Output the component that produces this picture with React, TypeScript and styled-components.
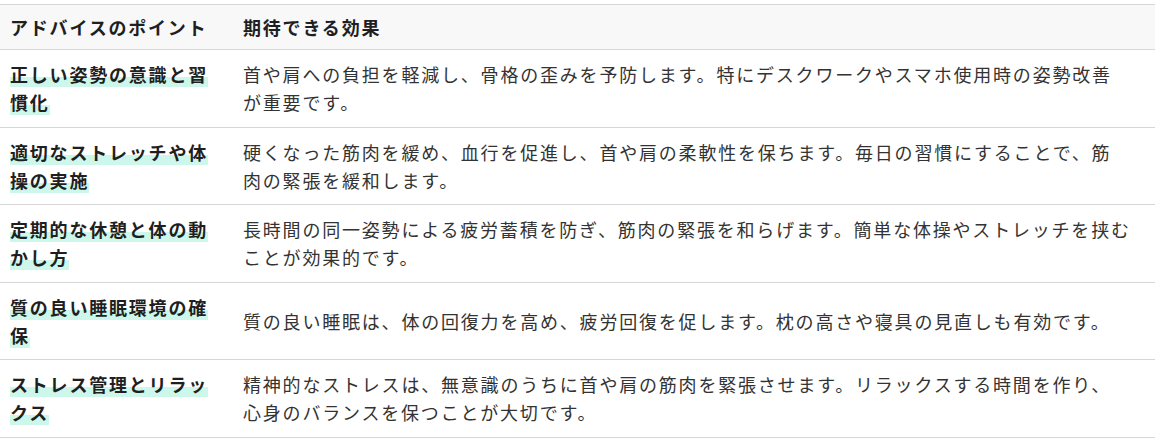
import React from "react";
import styled, { createGlobalStyle } from "styled-components";

const GlobalStyle = createGlobalStyle`
  body {
    margin: 0;
    background: #fff;
    font-family: "Noto Sans CJK JP", "Noto Sans", sans-serif;
  }
`;

const Wrapper = styled.div`
  padding-top: 4px;
`;

const Table = styled.table`
  width: 100%;
  border-collapse: collapse;
  font-size: 18px;
  line-height: 28px;
  letter-spacing: 0.1em;
  color: #333;
`;

const HeadCell = styled.th`
  text-align: left;
  font-weight: 700;
  color: #1f1f1f;
  background: #f8f8f8;
  padding: 8px 10px;
  border-top: 1px solid #d6d6d6;
  border-bottom: 1px solid #d6d6d6;
`;

const Cell = styled.td<{ $first?: boolean }>`
  padding: 10.25px 10px;
  vertical-align: middle;
  border-bottom: 1px solid #d6d6d6;
  width: ${(p) => (p.$first ? "213px" : "auto")};
  font-weight: ${(p) => (p.$first ? 700 : 400)};
  color: ${(p) => (p.$first ? "#1f1f1f" : "#333")};
`;

const Marker = styled.span`
  background: linear-gradient(transparent 62%, #cdf7ea 62%);
`;

const rows = [
  {
    point: "正しい姿勢の意識と習慣化",
    effect: [
      "首や肩への負担を軽減し、骨格の歪みを予防します。特にデスクワークやスマホ使用時の姿勢改善",
      "が重要です。",
    ],
  },
  {
    point: "適切なストレッチや体操の実施",
    effect: [
      "硬くなった筋肉を緩め、血行を促進し、首や肩の柔軟性を保ちます。毎日の習慣にすることで、筋",
      "肉の緊張を緩和します。",
    ],
  },
  {
    point: "定期的な休憩と体の動かし方",
    effect: [
      "長時間の同一姿勢による疲労蓄積を防ぎ、筋肉の緊張を和らげます。簡単な体操やストレッチを挟む",
      "ことが効果的です。",
    ],
  },
  {
    point: "質の良い睡眠環境の確保",
    effect: [
      "質の良い睡眠は、体の回復力を高め、疲労回復を促します。枕の高さや寝具の見直しも有効です。",
    ],
  },
  {
    point: "ストレス管理とリラックス",
    effect: [
      "精神的なストレスは、無意識のうちに首や肩の筋肉を緊張させます。リラックスする時間を作り、",
      "心身のバランスを保つことが大切です。",
    ],
  },
];

const App = () => {
  return (
    <Wrapper>
      <GlobalStyle />
      <Table>
        <thead>
          <tr>
            <HeadCell>アドバイスのポイント</HeadCell>
            <HeadCell>期待できる効果</HeadCell>
          </tr>
        </thead>
        <tbody>
          {rows.map((row) => (
            <tr key={row.point}>
              <Cell $first>
                <Marker>{row.point}</Marker>
              </Cell>
              <Cell>
                {row.effect.map((line, i) => (
                  <React.Fragment key={i}>
                    {i > 0 && <br />}
                    {line}
                  </React.Fragment>
                ))}
              </Cell>
            </tr>
          ))}
        </tbody>
      </Table>
    </Wrapper>
  );
};

export default App;
